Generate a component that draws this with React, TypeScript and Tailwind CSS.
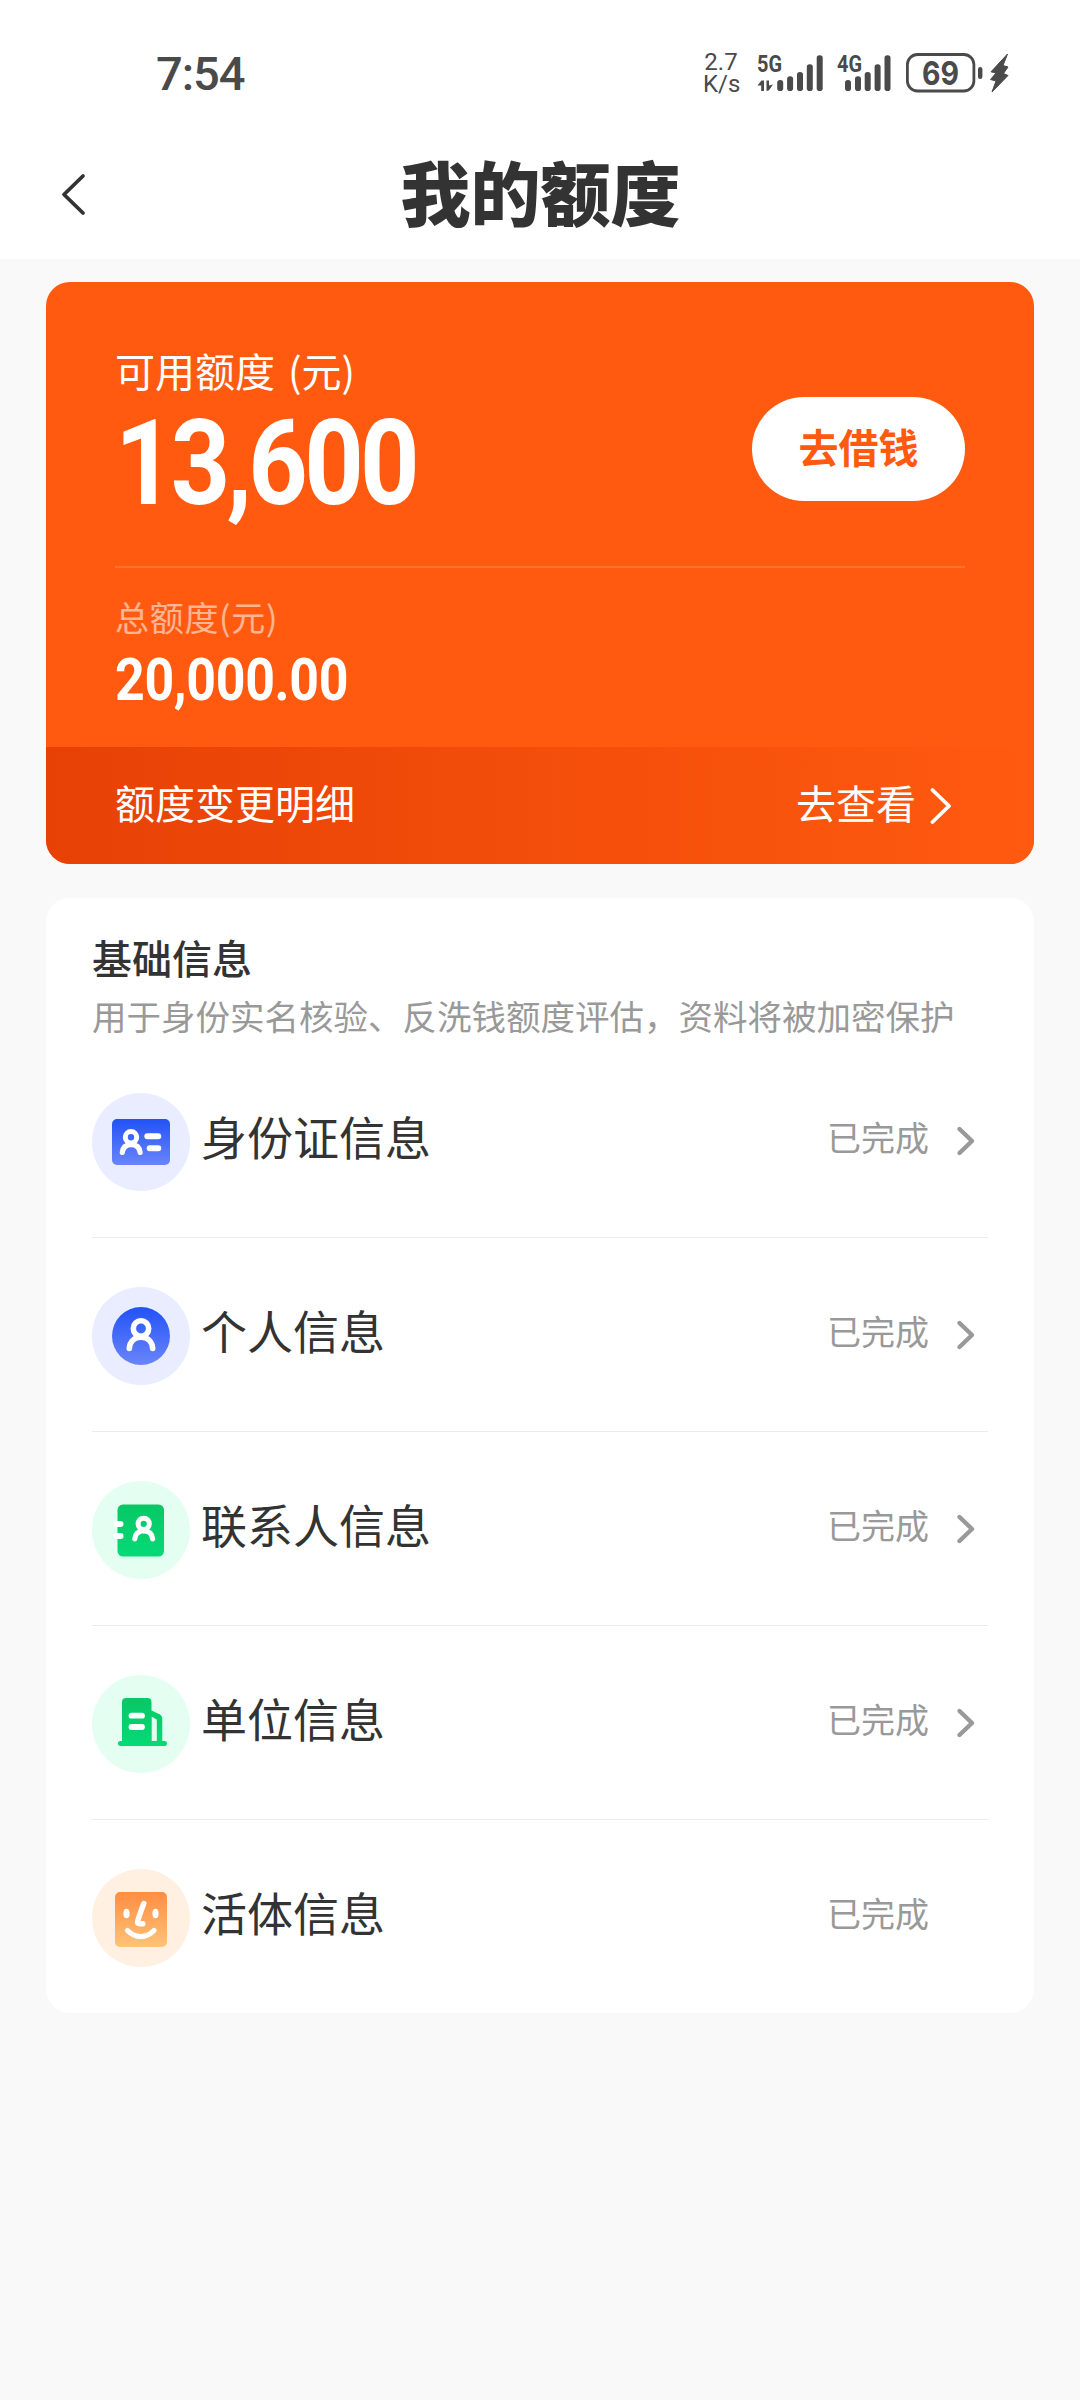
import React from 'react';
import clsx from 'clsx';

interface InfoItem {
    title: string;
    status: string;
    icon: React.ReactNode;
    iconBg: string;
    arrow: boolean;
}

const SignalBars: React.FC<{label: string; data?: boolean; short?: boolean}> = ({label, data, short}) => (
    <svg className="h-10 w-[68px] overflow-visible" viewBox="0 0 68 40" fill="#4a4a4a">
        <text x="0" y="19" fontSize="23" fontWeight="700" fontFamily="Roboto, sans-serif" textLength="25"
              lengthAdjust="spacingAndGlyphs">{label}</text>
        {data && (
            <path d="M0.5 32.5L4.5 27.5H7V38H4.2V32.5ZM9.5 27.5H12V32.5L16 31.5L12 37.2L9.5 38Z"/>
        )}
        <rect x={short ? 8 : 20.2} y="27" width="6" height="11" rx="2.8"/>
        <rect x={short ? 18 : 30.1} y="23.3" width="6" height="14.7" rx="2.8"/>
        <rect x={short ? 27.7 : 40} y="19" width="6" height="19" rx="2.8"/>
        <rect x={short ? 37.6 : 49.8} y="11.3" width="6" height="26.7" rx="2.8"/>
        <rect x={short ? 47.5 : 59.7} y="2.2" width="6" height="35.8" rx="2.8"/>
    </svg>
);

const StatusBar: React.FC = () => (
    <div className="flex h-[130px] items-center pt-4 pl-[156px] pr-[71px] font-['Roboto',sans-serif] text-[#4a4a4a]">
        <div className="text-[47px] leading-none font-medium tracking-[-1px]">7:54</div>
        <div className="flex-1"/>
        <div className="mr-[18px] w-9 text-center text-[24px] leading-[22px] font-normal">
            2.7<br/>K/s
        </div>
        <SignalBars label="5G" data/>
        <div className="w-3"/>
        <SignalBars label="4G" short/>
        <svg className="h-10 w-[104px]" viewBox="0 0 104 40" fill="#4a4a4a">
            <rect x="2.4" y="1.5" width="66.5" height="36.5" rx="10" fill="none" stroke="#4a4a4a" strokeWidth="2.8"/>
            <text x="17" y="31.8" fontSize="33" fontWeight="700" fontFamily="Inter, sans-serif" textLength="37"
                  lengthAdjust="spacingAndGlyphs">69</text>
            <rect x="73" y="14" width="4.4" height="12" rx="2.2"/>
            <path d="M102.5 1L86 18.8L91 20L85.5 26.5L91 28L87 39L103 22.5L98.5 20.5L103 14L98 12.5Z"
                  stroke="#4a4a4a" strokeWidth="1" strokeLinejoin="round"/>
        </svg>
    </div>
);

const NavBar: React.FC = () => (
    <div className="flex h-[129px] items-center pb-[8px]">
        <svg className="mt-2 ml-[61px] h-[43px] w-[25px]" viewBox="0 0 25 43" fill="none" stroke="#333"
             strokeWidth="3.8" strokeLinecap="round" strokeLinejoin="round">
            <path d="M22 3L3 21.5L22 40"/>
        </svg>
        <h1 className="flex-1 pr-[85px] text-center text-[70px] leading-[80px] font-black text-[#333]">我的额度</h1>
    </div>
);

const QuotaCard: React.FC = () => (
    <section className="mx-[46px] mt-[23px] flex h-[582px] flex-col overflow-hidden rounded-[24px] bg-[#ff5a0f] text-white">
        <div className="flex-1 px-[69px] pt-[60px]">
            <div className="flex justify-between">
                <div>
                    <div className="text-[40px] leading-[56px] [word-spacing:4px]">可用额度 (元)</div>
                    <div className="mt-[16px] origin-left scale-x-[0.88] font-['Roboto',sans-serif] text-[118px] leading-[100px] font-bold tracking-[-4.3px]">
                        13,600
                    </div>
                </div>
                <button className="mt-[55px] h-[104px] w-[213px] rounded-full bg-white pb-[6px] text-[40px] font-bold text-[#ff5a0f]">
                    去借钱
                </button>
            </div>
            <div className="mt-[52px] h-0.5 bg-white/15"/>
            <div className="mt-[25px] text-[34px] leading-[48px] tracking-[0.7px] text-white/55">总额度(元)</div>
            <div className="mt-[15px] origin-left scale-x-[0.88] font-['Roboto',sans-serif] text-[59px] leading-[48px] font-bold tracking-[-0.4px]">
                20,000.00
            </div>
        </div>
        <div className="flex h-[117px] items-center bg-linear-to-r from-[#e74106] to-[#ff5a0f] pr-[82px] pl-[69px] text-[40px] leading-[60px]">
            <span className="flex-1 pb-[7px]">额度变更明细</span>
            <span className="pb-[7px]">去查看</span>
            <svg className="ml-[14px] h-[38px] w-[22px]" viewBox="0 0 22 38" fill="none" stroke="white"
                 strokeWidth="3.8" strokeLinecap="round" strokeLinejoin="round">
                <path d="M2.5 3L19 19L2.5 35"/>
            </svg>
        </div>
    </section>
);

const IdCardIcon: React.FC = () => (
    <svg className="size-full" viewBox="0 0 98 98" fill="none">
        <defs>
            <linearGradient id="idBlue" x1="0" y1="26" x2="0" y2="72" gradientUnits="userSpaceOnUse">
                <stop stopColor="#2252f6"/>
                <stop offset="1" stopColor="#6a85fb"/>
            </linearGradient>
        </defs>
        <rect x="20" y="26" width="58" height="46" rx="5" fill="url(#idBlue)"/>
        <g stroke="white" strokeLinecap="round">
            <circle cx="39" cy="44.3" r="5.7" strokeWidth="5"/>
            <path d="M30.3 59.5C30.8 54.5 34 51.6 39.2 51.6S47.6 54.5 48.1 59.5" strokeWidth="5.2"/>
            <path d="M55.3 43.3H66.3M57.7 55.2H66.3" strokeWidth="6"/>
        </g>
    </svg>
);

const PersonIcon: React.FC = () => (
    <svg className="size-full" viewBox="0 0 98 98" fill="none">
        <defs>
            <linearGradient id="personBlue" x1="0" y1="20" x2="0" y2="78" gradientUnits="userSpaceOnUse">
                <stop stopColor="#2252f6"/>
                <stop offset="1" stopColor="#6a85fb"/>
            </linearGradient>
        </defs>
        <circle cx="49" cy="49" r="29" fill="url(#personBlue)"/>
        <g stroke="white" strokeWidth="5.6" strokeLinecap="round">
            <circle cx="49" cy="41.5" r="7.7"/>
            <path d="M37.3 61.5C37.8 54.5 42.3 50.3 49 50.3S60.2 54.5 60.7 61.5"/>
        </g>
    </svg>
);

const ContactIcon: React.FC = () => (
    <svg className="size-full" viewBox="0 0 98 98" fill="none">
        <defs>
            <linearGradient id="contactGreen" x1="0" y1="23" x2="0" y2="75" gradientUnits="userSpaceOnUse">
                <stop stopColor="#08c765"/>
                <stop offset="1" stopColor="#04da76"/>
            </linearGradient>
        </defs>
        <rect x="25.5" y="23.5" width="46.5" height="52" rx="5.5" fill="url(#contactGreen)"/>
        <g stroke="white" strokeLinecap="round">
            <path d="M24.5 43H28.5M24.5 55H28.5" strokeWidth="6"/>
            <circle cx="51.7" cy="42.8" r="5.6" strokeWidth="5"/>
            <path d="M42.8 57.8C43.3 52.8 46.5 50 51.7 50S60.1 52.8 60.6 57.8" strokeWidth="5.2"/>
        </g>
    </svg>
);

const CompanyIcon: React.FC = () => (
    <svg className="size-full" viewBox="0 0 98 98" fill="none">
        <defs>
            <linearGradient id="companyGreen" x1="0" y1="23" x2="0" y2="71" gradientUnits="userSpaceOnUse">
                <stop stopColor="#08c765"/>
                <stop offset="1" stopColor="#04da76"/>
            </linearGradient>
        </defs>
        <path d="M30 27a4 4 0 0 1 4-4H55.5a4 4 0 0 1 4 4V35.5L68 39.5Q70.3 40.8 70.3 43.5V66H72.5a2.4 2.4 0 0 1 0 5H28.5a2.4 2.4 0 0 1 0-5H30Z"
              fill="url(#companyGreen)"/>
        <path d="M59.7 41.5L64.8 44.8V66H59.7Z" fill="#e4fff1"/>
        <path d="M39.5 40.7H50M39.5 52H50" stroke="white" strokeWidth="5.8" strokeLinecap="round"/>
    </svg>
);

const FaceIcon: React.FC = () => (
    <svg className="size-full" viewBox="0 0 98 98" fill="none">
        <defs>
            <linearGradient id="faceOrange" x1="0" y1="23" x2="0" y2="78" gradientUnits="userSpaceOnUse">
                <stop stopColor="#ff8d42"/>
                <stop offset="1" stopColor="#ffc377"/>
            </linearGradient>
        </defs>
        <rect x="23" y="23" width="52" height="55" rx="5" fill="url(#faceOrange)"/>
        <ellipse cx="34.5" cy="44.5" rx="3.1" ry="4.8" fill="white"/>
        <ellipse cx="63.5" cy="44.5" rx="3.1" ry="4.8" fill="white"/>
        <g stroke="white" strokeLinecap="round" strokeLinejoin="round">
            <path d="M51.8 34.5C49 42 46.5 48 45.7 52.5C45.3 54.8 46.5 55 50.8 54.8" strokeWidth="5.4"/>
            <path d="M35.5 61.5C43 69.5 54.5 69.5 62 61.5" strokeWidth="5.2"/>
        </g>
    </svg>
);

const items: InfoItem[] = [
    {title: '身份证信息', status: '已完成', icon: <IdCardIcon/>, iconBg: 'bg-[#e9edff]', arrow: true},
    {title: '个人信息', status: '已完成', icon: <PersonIcon/>, iconBg: 'bg-[#e9edff]', arrow: true},
    {title: '联系人信息', status: '已完成', icon: <ContactIcon/>, iconBg: 'bg-[#e4fff1]', arrow: true},
    {title: '单位信息', status: '已完成', icon: <CompanyIcon/>, iconBg: 'bg-[#e4fff1]', arrow: true},
    {title: '活体信息', status: '已完成', icon: <FaceIcon/>, iconBg: 'bg-[#fff0e2]', arrow: false},
];

const InfoRow: React.FC<{item: InfoItem; last: boolean}> = ({item, last}) => (
    <div className={clsx('flex h-[194px] items-center border-b pt-[2px]', last ? 'border-transparent' : 'border-[#ebebeb]')}>
        <div className={clsx('size-[98px] shrink-0 rounded-full', item.iconBg)}>{item.icon}</div>
        <div className="mb-[14px] ml-[11px] flex-1 text-[46px] leading-[60px] text-[#333]">{item.title}</div>
        <div className="mb-[9px] text-[34px] leading-[48px] text-[#999]">{item.status}</div>
        <div className="mb-[2px] ml-[27px] w-[32px]">
            {item.arrow && (
                <svg className="h-[32px] w-[20px]" viewBox="0 0 20 32" fill="none" stroke="#999" strokeWidth="4.4"
                     strokeLinecap="round" strokeLinejoin="round">
                    <path d="M3.5 4L16 16L3.5 28"/>
                </svg>
            )}
        </div>
    </div>
);

const InfoCard: React.FC = () => (
    <section className="mx-[46px] mt-[34px] h-[1115px] rounded-[24px] bg-white px-[46px] pt-[31px]">
        <h2 className="text-[40px] leading-[56px] font-medium text-[#333]">基础信息</h2>
        <p className="mt-[6px] text-[34.5px] leading-[48px] whitespace-nowrap text-[#999]">
            用于身份实名核验、反洗钱额度评估，资料将被加密保护
        </p>
        <div className="mt-[5px]">
            {items.map((item, i) => (
                <InfoRow key={item.title} item={item} last={i === items.length - 1}/>
            ))}
        </div>
    </section>
);

export default function App() {
    return (
        <div className="h-[2400px] w-[1080px] overflow-hidden bg-[#f9f9f9] font-['Noto_Sans_CJK_SC',sans-serif]">
            <header className="bg-white">
                <StatusBar/>
                <NavBar/>
            </header>
            <QuotaCard/>
            <InfoCard/>
        </div>
    );
}
